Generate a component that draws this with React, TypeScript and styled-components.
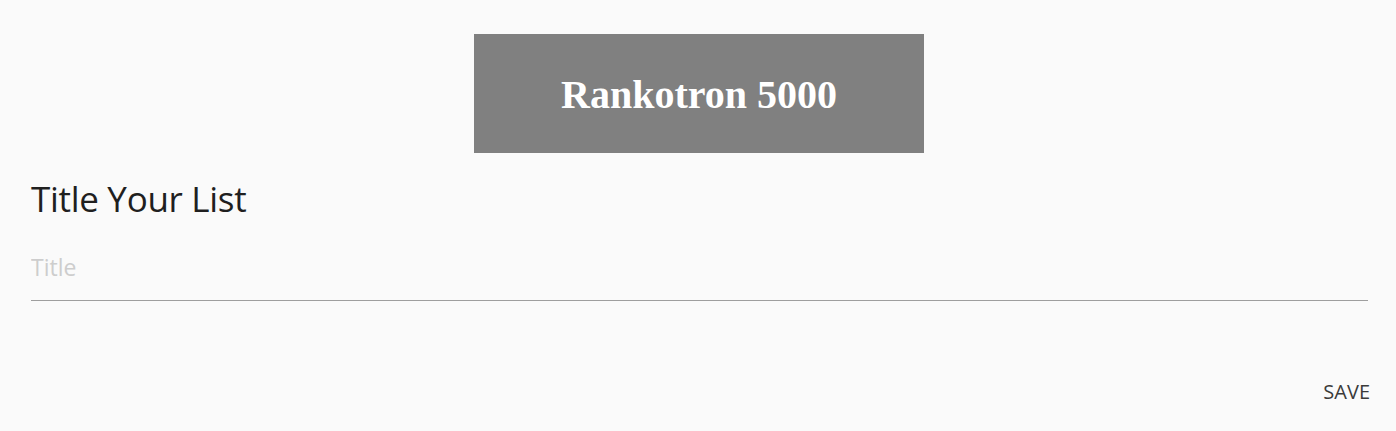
import React from "react";
import styled, { createGlobalStyle } from "styled-components";

const Global = createGlobalStyle`
  html, body { margin: 0; padding: 0; background: #fafafa; }
  body { font-family: "Open Sans", "Noto Sans", sans-serif; }
`;

const Page = styled.div`
  display: flex;
  flex-direction: column;
  padding: 34px 28px 0 31px;
`;

const Banner = styled.header`
  align-self: center;
  width: 450px;
  height: 119px;
  margin-right: 1px;
  background: #808080;
  display: flex;
  align-items: center;
  justify-content: center;
`;

const BannerTitle = styled.h1`
  margin: 0;
  font-family: "Liberation Serif", "Times New Roman", serif;
  font-weight: bold;
  font-size: 40px;
  color: #ffffff;
  padding-top: 2px;
`;

const Heading = styled.h2`
  margin: 24px 0 0;
  font-family: "Open Sans", "Noto Sans", sans-serif;
  font-weight: 400;
  font-size: 35px;
  line-height: 44px;
  color: #1f1f1f;
  letter-spacing: -0.3px;
`;

const Input = styled.input`
  margin-top: 30px;
  border: none;
  border-bottom: 1px solid #9e9e9e;
  background: transparent;
  font-family: "Open Sans", "Noto Sans", sans-serif;
  font-size: 23px;
  line-height: 32px;
  padding: 0 0 17px;
  outline: none;
  color: #222;
  &::placeholder { color: #cdcdcd; }
`;

const Actions = styled.div`
  display: flex;
  justify-content: flex-end;
  margin-top: 77px;
  margin-right: -2px;
`;

const SaveButton = styled.button`
  border: none;
  background: transparent;
  font-family: "Open Sans", "Noto Sans", sans-serif;
  font-size: 20px;
  color: #3a3a3a;
  padding: 0;
  cursor: pointer;
`;

export default function App() {
  return (
    <>
      <Global />
      <Page>
        <Banner>
          <BannerTitle>Rankotron 5000</BannerTitle>
        </Banner>
        <Heading>Title Your List</Heading>
        <Input placeholder="Title" />
        <Actions>
          <SaveButton>SAVE</SaveButton>
        </Actions>
      </Page>
    </>
  );
}
